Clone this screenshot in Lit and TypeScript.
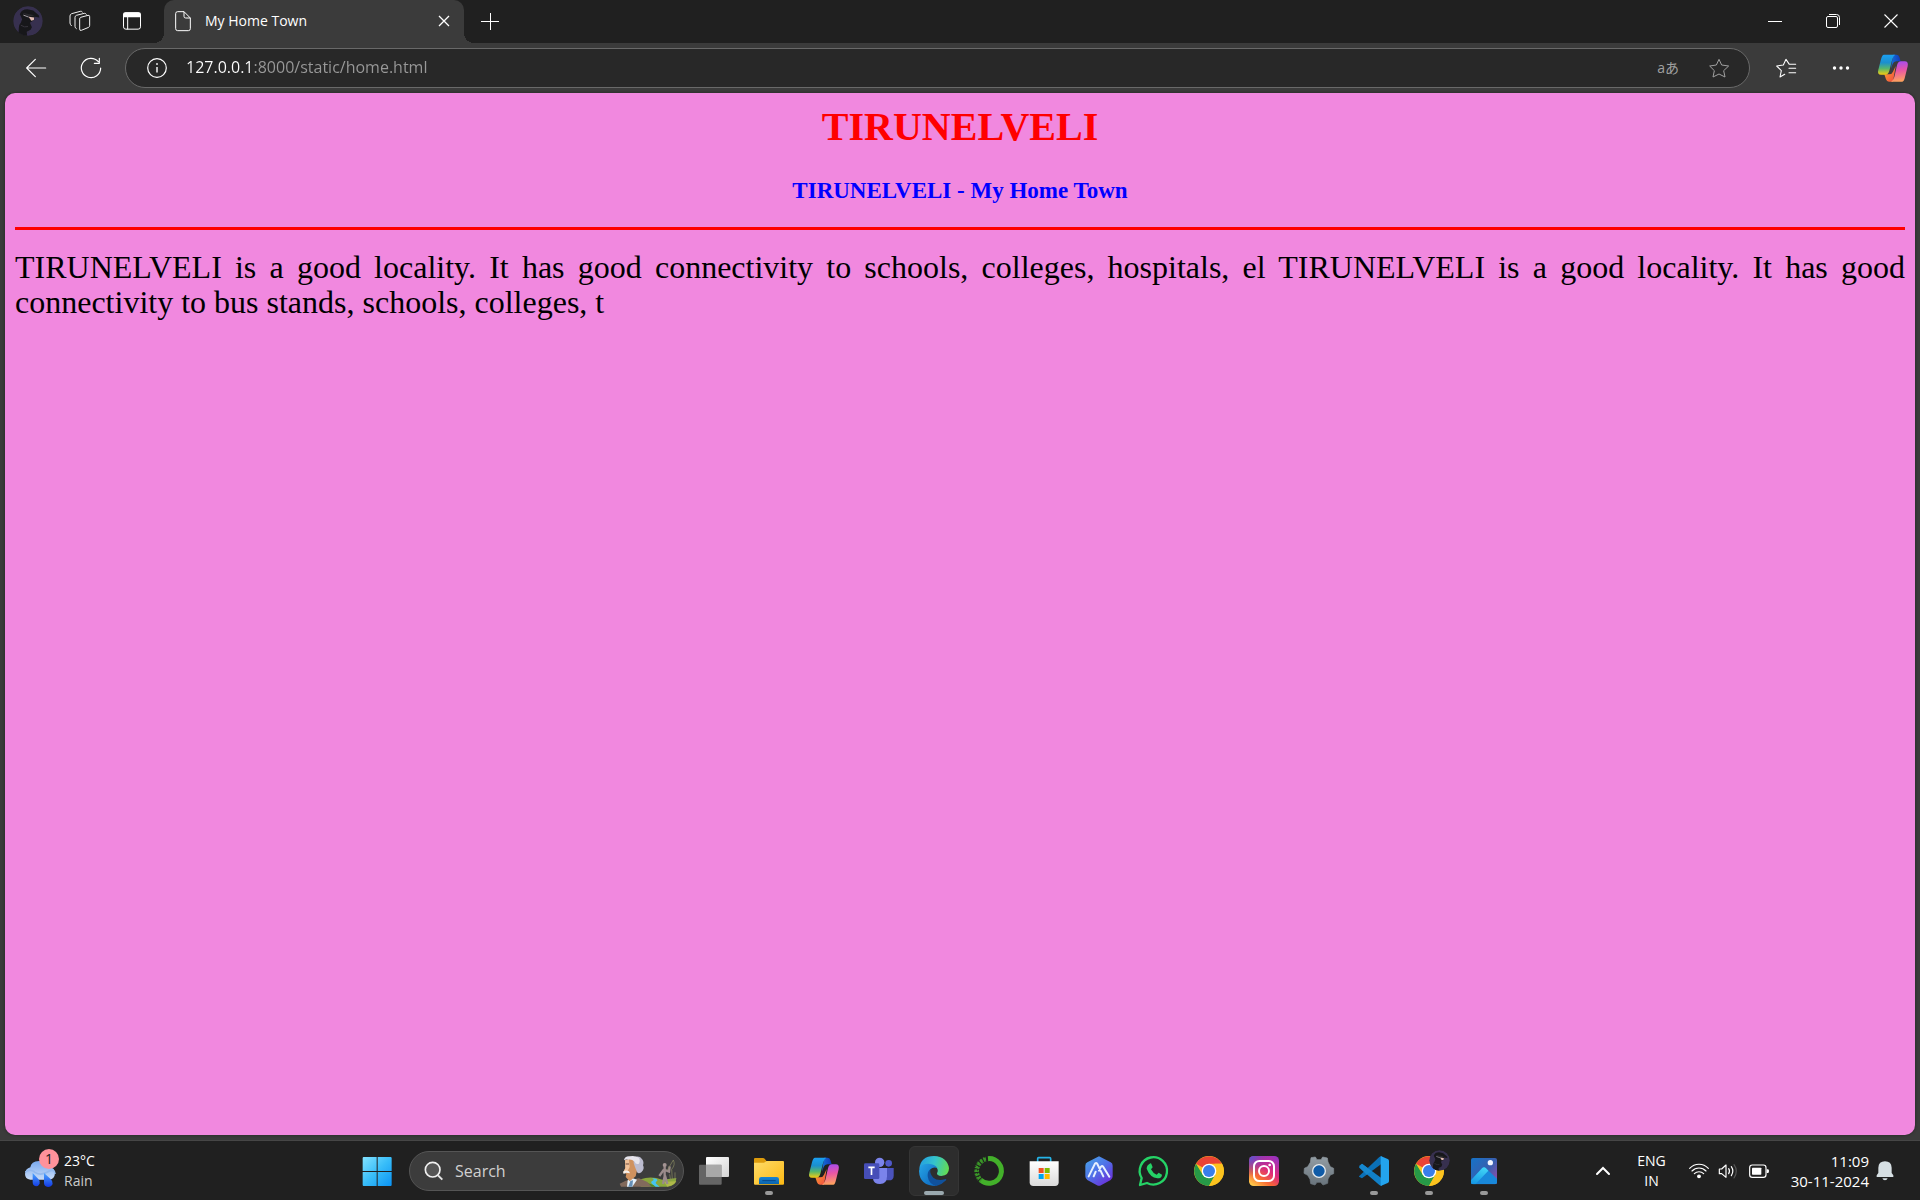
import { LitElement, html, css, svg, TemplateResult } from "lit";
import { customElement } from "lit/decorators.js";

/* ---------- Window and toolbar glyphs ---------- */

const avatar = (uid: string) => html`<svg width="30" height="30" viewBox="38 17 92 92" aria-hidden="true">
  <defs><clipPath id=${uid}><circle cx="84" cy="63" r="45" /></clipPath></defs>
  <g clip-path="url(#${uid})">
    <circle cx="84" cy="63" r="46" fill="#37304f" />
    <path d="M54 112 56 82Q56 74 62 68L66 58 59 42Q64 27 82 27L100 31 117 45 119 52 104 50 103 60 90 68 96 82 92 90 80 96 82 112Z" fill="#17171a" />
    <path d="M66 38 104 45 88 50Z" fill="#2b2a2e" />
    <path d="M86 50 103 52 102 60 94 62Z" fill="#e3bcb4" />
    <path d="M70 45 86 51" stroke="#a8a3a8" stroke-width="3" />
    <path d="M62 76Q74 84 84 80M84 100l3-6" stroke="#37343c" stroke-width="3" fill="none" />
  </g></svg>`;

const workspacesIcon = html`<svg width="24" height="24" viewBox="197 28 72 72" fill="none" stroke="#f2f2f2" stroke-width="3" stroke-linejoin="round" stroke-linecap="round" aria-hidden="true">
  <path d="M232 57Q232 54 235 53L257 47Q262 46 262 51V77Q262 81 259 83L237 92Q232 94 232 89Z" />
  <path d="M252 44Q250 40 246 41L222 47Q218 49 218 53V80Q218 85 222 87" />
  <path d="M240 37Q238 34 234 35L208 42Q203 44 203 49V70Q203 74 207 78" /></svg>`;

const tabActionsIcon = html`<svg width="24" height="24" viewBox="354 28 72 72" aria-hidden="true">
  <rect x="364.500" y="39.500" width="51" height="49" rx="7" fill="none" stroke="#fff" stroke-width="3" />
  <path d="M363 53V45Q363 38 370 38H410Q417 38 417 45V53Z" fill="#fff" />
  <path d="M377 52V89" stroke="#fff" stroke-width="3" /></svg>`;

const documentIcon = html`<svg width="20" height="22" viewBox="519 33 60 66" fill="none" stroke="#fff" stroke-width="3" stroke-linejoin="round" aria-hidden="true">
  <path d="M533 38H552L571 57V89Q571 95 565 95H533Q527 95 527 89V44Q527 38 533 38ZM552 38V52Q552 57 557 57H571" /></svg>`;

const smallCloseIcon = html`<svg width="12" height="12" viewBox="0 0 12 12" stroke="#fff" stroke-width="1.300" aria-hidden="true"><path d="M1 1 11 11M11 1 1 11" /></svg>`;
const plusIcon = html`<svg width="18" height="18" viewBox="0 0 18 18" stroke="#fff" aria-hidden="true"><path d="M0 9.500H18M9.500 1V18" /></svg>`;
const minimizeIcon = html`<svg width="14" height="14" viewBox="0 0 14 14" stroke="#fff" aria-hidden="true"><path d="M0 7.500H14" /></svg>`;
const restoreIcon = html`<svg width="14" height="14" viewBox="0 0 14 14" stroke="#fff" fill="none" aria-hidden="true">
  <rect x="0.500" y="2.500" width="11" height="11" rx="1.500" /><path d="M3 0.500H10.500Q13.500 0.500 13.500 3.500V11" /></svg>`;
const closeIcon = html`<svg width="14" height="14" viewBox="0 0 14 14" stroke="#fff" stroke-width="1.100" aria-hidden="true"><path d="M.5.5 13.500 13.500M13.500.5.5 13.500" /></svg>`;

const backIcon = html`<svg width="22" height="20" viewBox="72 171 66 60" fill="none" stroke="#fff" stroke-width="3.500" stroke-linecap="round" stroke-linejoin="round" aria-hidden="true"><path d="M134 201H77M103 175 77 201 103 227" /></svg>`;
const refreshIcon = html`<svg width="24" height="24" viewBox="234 167 72 72" fill="none" stroke="#fff" stroke-width="3.500" stroke-linecap="round" stroke-linejoin="round" aria-hidden="true">
  <path d="M299 203A29 29 0 1 1 292 184M295 174V189H280" /></svg>`;
const infoIcon = html`<svg width="20" height="20" viewBox="0 0 20 20" fill="none" stroke="#fff" aria-hidden="true"><circle cx="10" cy="10" r="9.300" stroke-width="1.200" /><path d="M10 9V14.500" stroke-width="1.400" /><circle cx="10" cy="6" r=".5" fill="#fff" /></svg>`;
const starPath = "M356 178 364 195 385 198 370 212 374 231 356 222 338 231 342 212 328 198 348 195Z";
const starIcon = html`<svg width="24" height="24" viewBox="320 168 72 72" fill="none" stroke="#a0a0a0" stroke-width="3" stroke-linejoin="round" aria-hidden="true"><path d=${starPath} /></svg>`;
const favoritesIcon = html`<svg width="24" height="24" viewBox="519 168 72 72" fill="none" stroke="#fff" stroke-width="3.200" stroke-linejoin="round" stroke-linecap="round" aria-hidden="true">
  <path d="M584 193H565L555 178 547 195 527 198 541 212 537 231 551 223M564 205H584M564 218H584" /></svg>`;
const dotsIcon = html`<svg width="18" height="18" viewBox="0 0 18 18" fill="#fff" aria-hidden="true"><circle cx="2.500" cy="9" r="1.700" /><circle cx="9" cy="9" r="1.700" /><circle cx="15.500" cy="9" r="1.700" /></svg>`;

const copilot = (uid: string) => html`<svg width="32" height="32" viewBox="204 70 96 96" aria-hidden="true">
  <defs>
    <linearGradient id="${uid}a" x1="0" y1="0" x2="0" y2="1"><stop offset="0" stop-color="#1ba0f2" /><stop offset=".4" stop-color="#1b8fce" /><stop offset=".7" stop-color="#58b76a" /><stop offset="1" stop-color="#f3cc12" /></linearGradient>
    <linearGradient id="${uid}b" x1=".4" y1="0" x2=".5" y2="1"><stop offset="0" stop-color="#a64cf0" /><stop offset=".45" stop-color="#e855a6" /><stop offset="1" stop-color="#ffa45c" /></linearGradient>
    <linearGradient id="${uid}c" x1="0" y1="0" x2="1" y2="0"><stop offset="0" stop-color="#136fd8" /><stop offset="1" stop-color="#1438b8" /></linearGradient>
    <linearGradient id="${uid}d" x1="0" y1="0" x2="1" y2="1"><stop offset="0" stop-color="#ffb02a" /><stop offset="1" stop-color="#ef4444" /></linearGradient>
  </defs>
  <path d="M252 78H262Q269 78 271 85L275 98H262Q254 98 251 106L246 120Z" fill="url(#${uid}c)" />
  <path d="M252 159H240Q233 159 231 152L226 137H240Q249 137 252 129L260 112Z" fill="url(#${uid}d)" />
  <path d="M225 78H259Q253 80 250 91L241 126Q238 138 228 138H216Q204 138 208 123L216 92Q219 78 225 78Z" fill="url(#${uid}a)" />
  <path d="M280 159H246Q253 156 256 145L264 110Q267 98 276 98H287Q299 98 296 113L288 145Q285 159 280 159Z" fill="url(#${uid}b)" />
</svg>`;

/* ---------- Taskbar artwork, drawn on 96-unit tiles ---------- */

const tile = (cx: number, body: TemplateResult) =>
  html`<svg width="32" height="32" viewBox="${cx - 48} 72 96 96" aria-hidden="true">${body}</svg>`;

const startIcon = tile(112, svg`
  <defs><linearGradient id="start" gradientUnits="userSpaceOnUse" x1="69" y1="78" x2="156" y2="165"><stop offset="0" stop-color="#83e2ff" /><stop offset=".5" stop-color="#38bdf9" /><stop offset="1" stop-color="#0a93f4" /></linearGradient></defs>
  <path d="M71 78H111V120H69V80ZM114 78H154L156 80V120H114ZM69 123H111V165H71L69 163ZM114 123H156V163L154 165H114Z" fill="url(#start)" />`);

const taskViewIcon = tile(1122, svg`
  <defs><linearGradient id="tv" x1="0" y1="0" x2="1" y2="1"><stop offset="0" stop-color="#fff" /><stop offset="1" stop-color="#d4d4d4" /></linearGradient></defs>
  <rect x="1098" y="78" width="69" height="60" rx="3" fill="url(#tv)" />
  <rect x="1077" y="101" width="68" height="60" rx="3" fill="#777" fill-opacity=".8" />
  <path d="M1098 101H1145V138H1098Z" fill="#b4b4b4" fill-opacity=".7" />`);

const folderIcon = tile(87, svg`
  <defs><linearGradient id="fold" x1="0" y1="0" x2="1" y2="1"><stop offset="0" stop-color="#ffdc69" /><stop offset="1" stop-color="#fcb913" /></linearGradient>
  <linearGradient id="foldb" x1="0" y1="0" x2="0" y2="1"><stop offset="0" stop-color="#1785d5" /><stop offset="1" stop-color="#0b63ac" /></linearGradient></defs>
  <path d="M42 100V84Q42 81 45 81H69Q72 81 74 83L80 91H100V100Z" fill="#dd9b0c" />
  <path d="M42 95H72L80 90H129Q132 90 132 93V158Q132 161 129 161H45Q42 161 42 158Z" fill="url(#fold)" />
  <path d="M57 159V145Q57 138 64 138H110Q117 138 117 145V159Z" fill="url(#foldb)" /><path d="M67 149H107" stroke="#07478a" stroke-width="3" />`);

const teamsIcon = tile(417, svg`
  <circle cx="446" cy="97" r="10" fill="#5059c9" /><path d="M436 111H461V134Q461 148 447 148H434Z" fill="#4b53bc" />
  <circle cx="419" cy="94" r="14" fill="#7b83eb" /><path d="M402 111H441V136Q441 159 420 159 401 159 399 143Z" fill="#7b83eb" />
  <rect x="372" y="97" width="46" height="47" rx="4" fill="#464eb8" /><path d="M385 109H404M394.500 109V132" stroke="#fff" stroke-width="5" />`);

const edgeIcon = tile(582, svg`
  <defs>
    <linearGradient id="ed1" x1="0" y1=".3" x2="1" y2=".5"><stop offset="0" stop-color="#249fe2" /><stop offset=".5" stop-color="#35c4cb" /><stop offset="1" stop-color="#62dc55" /></linearGradient>
    <linearGradient id="ed2" x1="0" y1="0" x2="1" y2="1"><stop offset="0" stop-color="#26a5e6" /><stop offset="1" stop-color="#0c63bd" /></linearGradient>
  </defs>
  <path d="M538 113Q542 75 582 75 622 77 627 112 627 134 604 135 590 134 591 127 597 116 588 108 568 94 538 113Z" fill="url(#ed1)" />
  <path d="M537 120Q539 97 565 98 585 99 592 111 580 106 571 115 562 132 573 149 580 160 589 165 539 165 537 120Z" fill="url(#ed2)" />
  <path d="M571 115Q562 121 563 136 566 159 589 165 607 160 619 147 619 143 614 145 593 151 580 140 569 129 571 115Z" fill="#10519c" />`);

const anacondaIcon = tile(747, svg`
  <path d="M744 83A37 37 0 1 1 722 147" fill="none" stroke="#43b02a" stroke-width="15" />
  <path d="M738 84A37 37 0 0 0 724 149" fill="none" stroke="#3a9628" stroke-width="14" stroke-dasharray="8 3" />
  <path d="M736 78A43 43 0 0 0 715 148M741 88A34 34 0 0 0 720 143" fill="none" stroke="#202020" stroke-width="3" stroke-dasharray="4 6" />`);

const storeIcon = tile(910, svg`
  <defs><linearGradient id="sto" x1="0" y1="0" x2="0" y2="1"><stop offset="0" stop-color="#fff" /><stop offset="1" stop-color="#dadada" /></linearGradient></defs>
  <path d="M891 96V83Q891 80 894 80H927Q930 80 930 83V96" fill="none" stroke="#25b4e8" stroke-width="5" />
  <path d="M867 91H954V154Q954 165 943 165H878Q867 165 867 154Z" fill="url(#sto)" />
  <path d="M894 111H909V126H894Z" fill="#f25022" /><path d="M912 111H927V126H912Z" fill="#7fba00" /><path d="M894 129H909V144H894Z" fill="#00a4ef" /><path d="M912 129H927V144H912Z" fill="#ffb900" />`);

const mountainIcon = tile(1077, svg`
  <defs><linearGradient id="mou" x1="0" y1="0" x2=".8" y2="1"><stop offset="0" stop-color="#48a9e8" /><stop offset=".5" stop-color="#4f73e8" /><stop offset="1" stop-color="#6c2bd9" /></linearGradient></defs>
  <path d="M1077 76 1112 94Q1118 97 1118 104V136Q1118 143 1112 147L1083 163Q1077 166 1071 163L1042 147Q1036 143 1036 136V104Q1036 97 1042 94Z" fill="url(#mou)" />
  <path d="M1046 136 1065 98Q1069 93 1072 99L1090 136M1077 119 1083 107Q1087 103 1090 108L1108 137M1061 136 1067 122" fill="none" stroke="#e6f0ff" stroke-width="6" stroke-linecap="round" stroke-linejoin="round" />`);

const whatsappIcon = tile(42, svg`
  <path d="M5 141A41 41 0 1 1 21 156L0 162Z" fill="none" stroke="#25d366" stroke-width="7" stroke-linejoin="round" />
  <path d="M29 98Q33 95 35 101L38 109 33 115Q39 127 50 131L56 125 66 131Q66 142 52 142 30 139 20 113 20 103 29 98Z" fill="#25d366" />`);

const chromeBody = (cx: number) => svg`
  <circle cx=${cx} cy="120" r="45" fill="#fcc31e" />
  <g transform="translate(${cx} 120)">
    <path d="M0 0-39-22A45 45 0 0 1 39-22H0Z" fill="#ea4335" /><path d="M-39-22-19 11 19 11 0 45A45 45 0 0 1-39-22Z" fill="#269947" />
    <path d="M39-22A45 45 0 0 1 0 45L19 11Q26-4 17-22Z" fill="#fcc31e" />
    <circle r="22" fill="#fff" /><circle r="18" fill="#397ee9" /></g>`;
const chromeIcon = tile(207, chromeBody(207));
const chromeProfileIcon = html`<span class="profiled">${tile(867, chromeBody(867))}<span class="mini-avatar">${avatar("mini")}</span></span>`;

const instagramIcon = tile(372, svg`
  <defs><linearGradient id="ig1" x1=".1" y1="1" x2=".8" y2="0"><stop offset="0" stop-color="#ffd34e" /><stop offset=".3" stop-color="#f86b32" /><stop offset=".6" stop-color="#dd2a7b" /><stop offset="1" stop-color="#9b32bd" /></linearGradient>
  <radialGradient id="ig2" cx="0" cy="0" r=".7"><stop offset="0" stop-color="#4c5bd8" /><stop offset="1" stop-color="#7038c8" stop-opacity="0" /></radialGradient></defs>
  <rect x="327" y="75" width="90" height="90" rx="14" fill="url(#ig1)" /><rect x="327" y="75" width="90" height="90" rx="14" fill="url(#ig2)" />
  <g fill="none" stroke="#fff" stroke-width="6"><rect x="342" y="90" width="60" height="60" rx="16" /><circle cx="372" cy="120" r="15" /></g><circle cx="389" cy="102" r="4" fill="#fff" />`);

const settingsIcon = tile(537, svg`
  <defs><linearGradient id="gear" x1="0" y1="0" x2="0" y2="1"><stop offset="0" stop-color="#929ca3" /><stop offset="1" stop-color="#69747c" /></linearGradient></defs>
  <path d="M513 80 526 78 531 86H543L548 78 562 81 564 93 571 107 581 112 581 128 571 132 564 144 563 157 549 162 542 154H531L525 162 512 158 510 145 503 133 492 127 493 112 503 107 511 94Z" fill="url(#gear)" stroke="url(#gear)" stroke-linejoin="round" stroke-width="2" />
  <circle cx="537" cy="120" r="21" fill="#e9edf0" /><circle cx="537" cy="120" r="17" fill="#0f5ba7" />`);

const vscodeIcon = tile(702, svg`
  <path d="M658 104 666 98 725 142V165L718 162 658 110Z" fill="#1180c8" />
  <path d="M657 136 718 78 725 75V98L666 142 657 137Z" fill="#0b70b7" />
  <path d="M722 75 743 84Q747 86 747 90V150Q747 154 743 156L722 165Z" fill="#23a4ee" /><path d="M666 98 696 121 680 131 658 109Z" fill="#1688cf" />`);

const photosIcon = tile(1032, svg`
  <defs><linearGradient id="ph1" x1="0" y1="0" x2="1" y2=".8"><stop offset="0" stop-color="#1573c8" /><stop offset=".6" stop-color="#385eae" /><stop offset="1" stop-color="#8e4eaa" /></linearGradient>
  <linearGradient id="ph2" x1=".6" y1="0" x2=".3" y2="1"><stop offset="0" stop-color="#40d4f6" /><stop offset="1" stop-color="#1597e4" /></linearGradient><clipPath id="phc"><rect x="993" y="81" width="78" height="79" rx="6" /></clipPath></defs>
  <g clip-path="url(#phc)"><path d="M993 81H1071V160H993Z" fill="url(#ph1)" /><path d="M993 148 1026 112Q1032 106 1038 112L1071 143V160H993Z" fill="#1988da" /><path d="M993 148 1026 112Q1032 106 1038 112L1045 119 1006 160H993Z" fill="url(#ph2)" /></g>
  <circle cx="1051" cy="95" r="8" fill="#f3f5ff" />`);

const searchGlass = html`<svg width="20" height="20" viewBox="250 91 60 60" aria-hidden="true"><circle cx="276" cy="117" r="22" fill="#555" stroke="#f0f0f0" stroke-width="5" /><path d="M292 134 305 147" stroke="#e4e4e4" stroke-width="6" /></svg>`;

const searchArt = html`<svg width="60" height="32" viewBox="840 76 180 96" aria-hidden="true">
  <path d="M905 149Q935 138 970 150L1012 145Q1012 170 984 171H905Z" fill="#8aa83c" /><path d="M920 158 958 171H930Z" fill="#4b8528" /><path d="M975 156 1012 155Q1004 168 985 171Z" fill="#b0b94a" />
  <path d="M938 145Q950 150 938 155 932 160 950 171H962Q944 160 953 155 962 148 938 145Z" fill="#45c4f1" />
  <path d="M842 162 860 153 900 146 925 157 938 171H846Z" fill="#826a5c" />
  <path d="M866 152 880 145 894 150 880 171H864Z" fill="#e5f1fb" /><path d="M874 154 882 152 880 171H868Z" fill="#668fb6" />
  <path d="M858 92 880 84 898 105 890 140 872 155 860 142 862 133 853 128 859 115Z" fill="#d0925f" /><path d="M858 92 870 90 872 112 866 124 853 128 859 115Z" fill="#efc29a" />
  <path d="M884 84Q900 76 909 88 916 96 912 107 918 118 907 128 898 134 894 127L888 112 884 100Z" fill="#bcbccf" />
  <path d="M855 92Q857 79 872 80 888 77 899 84 905 90 900 102 890 106 887 96 878 88 868 90 861 88 855 92Z" fill="#e6e4ec" />
  <path d="M852 126Q861 119 870 125L873 131 861 129 854 133Z" fill="#f5f0eb" /><path d="M860 103H870" stroke="#714b3c" stroke-width="3" />
  <path d="M977 110V140L972 163M978 138 985 163M975 119 961 139M978 121 990 126 992 110" fill="none" stroke="#9b8b8b" stroke-width="7" /><circle cx="977" cy="106" r="6" fill="#a49493" />
  <path d="M984 123 1003 91Q1010 105 998 119L1000 150M1008 128V150M992 134 995 153" fill="none" stroke="#8b8c62" stroke-width="2" /></svg>`;

const weatherIcon = html`<svg width="32" height="30" viewBox="72 108 96 90" aria-hidden="true">
  <defs><linearGradient id="cl" x1="0" y1="0" x2="0" y2="1"><stop offset="0" stop-color="#79a9ef" /><stop offset="1" stop-color="#c7dbf8" /></linearGradient><linearGradient id="dr" x1="0" y1="0" x2="0" y2="1"><stop offset="0" stop-color="#4ba5ff" /><stop offset="1" stop-color="#1238e4" /></linearGradient></defs>
  <path d="M91 170Q75 168 75 153 76 137 91 133 93 115 117 114 139 114 145 134 165 132 165 151 164 170 146 170Z" fill="url(#cl)" /><path d="M76 147Q92 136 105 148 124 160 148 144 164 138 165 153" fill="none" stroke="#93b9ee" stroke-width="5" />
  <path d="M98 150 115 168Q122 175 119 182 115 190 108 190 98 188 98 178ZM132 150 151 167Q160 175 158 183 154 192 144 192 132 190 132 180Z" fill="url(#dr)" /></svg>`;

const chevronIcon = html`<svg width="14" height="9" viewBox="0 0 14 9" fill="none" stroke="#fff" stroke-width="2" stroke-linecap="round" aria-hidden="true"><path d="M1 8 7 2 13 8" /></svg>`;
const wifiIcon = html`<svg width="22" height="20" viewBox="381 119 66 60" fill="none" stroke="#fff" stroke-width="3.500" stroke-linecap="round" aria-hidden="true">
  <path d="M386 141A38 38 0 0 1 442 141M393 149A29 29 0 0 1 435 149M400 157A20 20 0 0 1 428 157" /><circle cx="414" cy="165" r="4" fill="#fff" /></svg>`;
const volumeIcon = html`<svg width="22" height="20" viewBox="471 119 66 60" fill="none" stroke="#fff" stroke-width="3.500" stroke-linecap="round" stroke-linejoin="round" aria-hidden="true">
  <path d="M475 143H482L495 131V168L482 157H475ZM503 142Q508 149 503 157M511 136Q520 149 511 163" /><path d="M519 130Q533 149 519 170" stroke="#555" /></svg>`;
const batteryIcon = html`<svg width="22" height="20" viewBox="561 120 66 60" fill="none" stroke="#fff" stroke-width="3.500" aria-hidden="true">
  <rect x="566" y="132" width="49" height="37" rx="8" /><rect x="573" y="140" width="28" height="21" rx="2" fill="#fff" stroke="none" /><path d="M617 145H621Q624 145 624 150 624 156 621 156H617" fill="#fff" stroke="none" /></svg>`;
const bellIcon = html`<svg width="18" height="22" viewBox="948 119 54 66" fill="#d6dfe3" aria-hidden="true"><path d="M950 170V165L955 158V142Q956 123 975 123 994 123 995 142V158L1000 165V170ZM967 174H983Q981 180 975 180 969 180 967 174Z" /></svg>`;

interface TaskApp { name: string; icon: TemplateResult; state?: "running" | "active" }

const apps: TaskApp[] = [
  { name: "Task view", icon: taskViewIcon },
  { name: "File Explorer", icon: folderIcon, state: "running" },
  { name: "Copilot", icon: copilot("tb") },
  { name: "Microsoft Teams", icon: teamsIcon },
  { name: "Microsoft Edge", icon: edgeIcon, state: "active" },
  { name: "Anaconda Navigator", icon: anacondaIcon },
  { name: "Microsoft Store", icon: storeIcon },
  { name: "Assistant", icon: mountainIcon },
  { name: "WhatsApp", icon: whatsappIcon },
  { name: "Google Chrome", icon: chromeIcon },
  { name: "Instagram", icon: instagramIcon },
  { name: "Settings", icon: settingsIcon },
  { name: "Visual Studio Code", icon: vscodeIcon, state: "running" },
  { name: "Google Chrome, second profile", icon: chromeProfileIcon, state: "running" },
  { name: "Photos", icon: photosIcon, state: "running" },
];

const resets = css`
  * { box-sizing: border-box; }
  svg { display: block; flex: none; overflow: visible; }
  button { display: flex; align-items: center; justify-content: center; padding: 0; border: 0; background: none; color: inherit; font: inherit; }
  input { min-width: 0; padding: 0; border: 0; outline: 0; background: none; font: inherit; }
`;

@customElement("browser-chrome")
class BrowserChrome extends LitElement {
  static styles = [resets, css`
    :host { display: block; background: #3b3b3b; color: #fff; font-family: "Open Sans", "Noto Sans CJK JP", sans-serif; }
    .tabstrip { display: flex; height: 43px; background: #202020; }
    .leading { display: flex; align-items: center; gap: 4px; padding: 0 0 2px 4px; width: 164px; }
    .leading button { width: 48px; height: 41px; }
    .tab { position: relative; display: flex; align-items: center; width: 300px; padding: 0 10px 2px 9px; border-radius: 10px 10px 0 0; background: #3b3b3b; font-size: 14px; }
    .tab::before, .tab::after { content: ""; position: absolute; bottom: 0; width: 10px; height: 10px; }
    .tab::before { right: 100%; background: radial-gradient(circle at 0 0, #202020 10px, #3b3b3b 10px); }
    .tab::after { left: 100%; background: radial-gradient(circle at 100% 0, #202020 10px, #3b3b3b 10px); }
    .tab-title { flex: 1; padding-left: 12px; line-height: 20px; }
    .tab-close { width: 20px; height: 20px; }
    .new-tab { width: 52px; padding-bottom: 2px; }
    .window-controls { display: flex; margin-left: auto; padding-bottom: 2px; }
    .window-controls button { width: 58px; }
    .toolbar { display: flex; align-items: center; height: 50px; padding: 0 2px 0 8px; }
    .nav { width: 55px; height: 40px; }
    .address { display: flex; flex: 1; align-items: center; height: 40px; margin: 0 8px 0 7px; padding: 0 18px 0 21px; border: 1px solid #696969; border-radius: 20px; background: #282828; }
    .url { flex: 1; height: 24px; margin-left: 19px; padding-bottom: 2px; font-size: 16px; color: transparent; background: linear-gradient(90deg, #fff 65px, #999 65px); -webkit-background-clip: text; background-clip: text; }
    .translate { margin-right: 28px; padding-bottom: 2px; color: #a0a0a0; font-size: 14px; }
    .tool { width: 55px; height: 40px; }
    .assistant { width: 50px; }
  `];

  render() {
    return html`
      <header class="tabstrip">
        <div class="leading">
          <button aria-label="Profile">${avatar("profile")}</button>
          <button aria-label="Workspaces">${workspacesIcon}</button>
          <button aria-label="Tab actions">${tabActionsIcon}</button>
        </div>
        <div class="tab">${documentIcon}<span class="tab-title">My Home Town</span>
          <button class="tab-close" aria-label="Close tab">${smallCloseIcon}</button></div>
        <button class="new-tab" aria-label="New tab">${plusIcon}</button>
        <div class="window-controls">
          <button aria-label="Minimize">${minimizeIcon}</button>
          <button aria-label="Restore">${restoreIcon}</button>
          <button aria-label="Close">${closeIcon}</button>
        </div>
      </header>
      <nav class="toolbar" aria-label="Browser toolbar">
        <button class="nav" aria-label="Back">${backIcon}</button>
        <button class="nav" aria-label="Refresh">${refreshIcon}</button>
        <div class="address">
          <button aria-label="Site information">${infoIcon}</button>
          <input class="url" type="text" aria-label="Address" value="127.0.0.1:8000/static/home.html" />
          <button class="translate" aria-label="Translate">aあ</button>
          <button aria-label="Add to favorites">${starIcon}</button>
        </div>
        <button class="tool" aria-label="Favorites">${favoritesIcon}</button>
        <button class="tool" aria-label="Settings and more">${dotsIcon}</button>
        <button class="assistant" aria-label="Copilot">${copilot("br")}</button>
      </nav>`;
  }
}

@customElement("town-page")
class TownPage extends LitElement {
  static styles = css`
    :host { display: block; margin: 0 5px 5px; padding: 11px 10px; border-radius: 10px; background: #f188df; box-shadow: 0 0 3px #222; font-family: "Liberation Serif", serif; }
    h1, h3 { margin: 0; text-align: center; }
    h1 { color: #f00; font-size: 40px; line-height: 46px; }
    h3 { margin: 27px 0 22px; color: #00f; font-size: 23px; line-height: 28px; }
    hr { height: 3px; margin: 0; border: 0; background: #f00; }
    p { margin: 20px 0; color: #000; font-size: 32px; line-height: 35px; text-align: justify; }
  `;

  render() {
    return html`
      <h1>TIRUNELVELI</h1>
      <h3>TIRUNELVELI - My Home Town</h3>
      <hr />
      <p>TIRUNELVELI is a good locality. It has good connectivity to schools, colleges, hospitals, el TIRUNELVELI is a good locality. It has good connectivity to bus stands, schools, colleges, t</p>`;
  }
}

@customElement("task-bar")
class TaskBar extends LitElement {
  static styles = [resets, css`
    :host { box-sizing: border-box; display: grid; grid-template-columns: 352px 1fr auto; align-items: center; height: 60px; border-top: 1px solid #464646; background: #202020; color: #fff; font-family: "Open Sans", sans-serif; font-size: 14px; line-height: 20px; }
    .weather { display: flex; justify-self: start; gap: 8px; padding-left: 24px; text-align: left; }
    .forecast { position: relative; padding-top: 6px; }
    .badge { position: absolute; top: -4px; left: 15px; width: 20px; height: 20px; border-radius: 50%; background: #ff929b; color: #202020; text-align: center; }
    .condition { color: #ccc; }
    .apps { display: flex; align-items: center; gap: 5px; }
    .app { position: relative; flex: none; width: 50px; height: 50px; border: 1px solid transparent; border-radius: 6px; }
    .active { border-color: #353535; background: #2d2d2d; }
    .running::after, .active::after { content: ""; position: absolute; bottom: 0; width: 8px; height: 4px; border-radius: 2px; background: #999; }
    .active::after { width: 20px; background: #9ba9af; }
    .search { display: flex; align-items: center; width: 275px; height: 40px; margin-left: 2px; padding: 0 4px 0 14px; border: 1px solid #555; border-radius: 20px; background: #3c3c3c; }
    .search input { flex: 1; margin-left: 11px; color: #fff; font-size: 16px; }
    .search input::placeholder { color: #d0d0d0; opacity: 1; }
    .profiled { position: relative; }
    .mini-avatar { position: absolute; top: -5px; right: -5px; }
    .mini-avatar svg { width: 21px; height: 21px; }
    .tray { display: flex; align-items: center; padding-right: 26px; }
    .language { margin: 0 22px 0 27px; text-align: center; }
    .status { gap: 8px; }
    .clock { margin: 0 7px 0 21px; font-size: 15px; text-align: right; }
  `];

  render() {
    return html`
      <button class="weather" aria-label="Weather">
        <span class="forecast">${weatherIcon}<span class="badge">1</span></span>
        <span>23°C<br /><span class="condition">Rain</span></span>
      </button>
      <nav class="apps" aria-label="Taskbar">
        <button class="app" aria-label="Start">${startIcon}</button>
        <label class="search">${searchGlass}<input type="text" aria-label="Search" placeholder="Search" />${searchArt}</label>
        ${apps.map((app) => html`<button class="app ${app.state ?? ""}" aria-label=${app.name}>${app.icon}</button>`)}
      </nav>
      <div class="tray">
        <button aria-label="Show hidden icons">${chevronIcon}</button>
        <button class="language">ENG<br />IN</button>
        <button class="status" aria-label="Network, volume and battery">${wifiIcon}${volumeIcon}${batteryIcon}</button>
        <button class="clock">11:09<br />30-11-2024</button>
        <button aria-label="Notifications">${bellIcon}</button>
      </div>`;
  }
}

@customElement("app-root")
class AppRoot extends LitElement {
  static styles = css`
    :host { display: flex; flex-direction: column; min-height: 100vh; background: #3b3b3b; }
    town-page { flex: 1; }
  `;

  render() {
    return html`<browser-chrome></browser-chrome><town-page></town-page><task-bar></task-bar>`;
  }
}
